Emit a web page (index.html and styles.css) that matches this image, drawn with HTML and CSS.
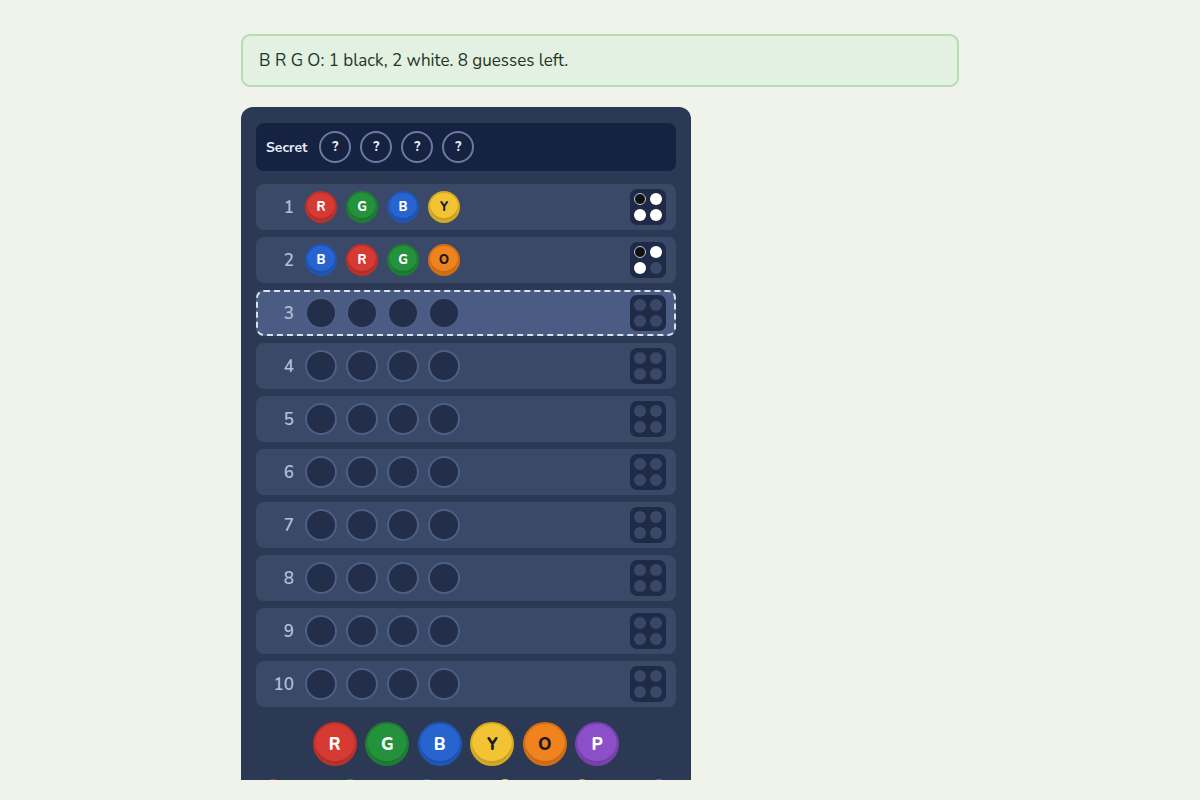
FILE: index.html
```html
<!DOCTYPE html>
<html lang="en">

<head>
    <meta charset="UTF-8">
    <meta name="viewport" content="width=device-width, initial-scale=1.0">
    <title>Mastermind</title>
    <link rel="stylesheet" href="styles.css">
</head>

<body>

    <div class="container">
        <!-- Mensagem de status -->
        <div class="status">B R G O: 1 black, 2 white. 8 guesses left.</div>

        <div class="board">
            <div class="secret">
                <span class="secret-label">Secret</span>
                <span class="hidden-peg">?</span>
                <span class="hidden-peg">?</span>
                <span class="hidden-peg">?</span>
                <span class="hidden-peg">?</span>
            </div>

            <div class="rows">
                <div class="row">
                    <span class="num">1</span>
                    <span class="peg red">R</span>
                    <span class="peg green">G</span>
                    <span class="peg blue">B</span>
                    <span class="peg yellow">Y</span>
                    <div class="feedback">
                        <span class="key black"></span><span class="key white"></span>
                        <span class="key white"></span><span class="key white"></span>
                    </div>
                </div>
                <div class="row">
                    <span class="num">2</span>
                    <span class="peg blue">B</span>
                    <span class="peg red">R</span>
                    <span class="peg green">G</span>
                    <span class="peg orange">O</span>
                    <div class="feedback">
                        <span class="key black"></span><span class="key white"></span>
                        <span class="key white"></span><span class="key"></span>
                    </div>
                </div>
                <div class="row active">
                    <span class="num">3</span>
                    <span class="peg empty"></span><span class="peg empty"></span>
                    <span class="peg empty"></span><span class="peg empty"></span>
                    <div class="feedback">
                        <span class="key"></span><span class="key"></span>
                        <span class="key"></span><span class="key"></span>
                    </div>
                </div>
                <div class="row">
                    <span class="num">4</span>
                    <span class="peg empty"></span><span class="peg empty"></span>
                    <span class="peg empty"></span><span class="peg empty"></span>
                    <div class="feedback">
                        <span class="key"></span><span class="key"></span>
                        <span class="key"></span><span class="key"></span>
                    </div>
                </div>
                <div class="row">
                    <span class="num">5</span>
                    <span class="peg empty"></span><span class="peg empty"></span>
                    <span class="peg empty"></span><span class="peg empty"></span>
                    <div class="feedback">
                        <span class="key"></span><span class="key"></span>
                        <span class="key"></span><span class="key"></span>
                    </div>
                </div>
                <div class="row">
                    <span class="num">6</span>
                    <span class="peg empty"></span><span class="peg empty"></span>
                    <span class="peg empty"></span><span class="peg empty"></span>
                    <div class="feedback">
                        <span class="key"></span><span class="key"></span>
                        <span class="key"></span><span class="key"></span>
                    </div>
                </div>
                <div class="row">
                    <span class="num">7</span>
                    <span class="peg empty"></span><span class="peg empty"></span>
                    <span class="peg empty"></span><span class="peg empty"></span>
                    <div class="feedback">
                        <span class="key"></span><span class="key"></span>
                        <span class="key"></span><span class="key"></span>
                    </div>
                </div>
                <div class="row">
                    <span class="num">8</span>
                    <span class="peg empty"></span><span class="peg empty"></span>
                    <span class="peg empty"></span><span class="peg empty"></span>
                    <div class="feedback">
                        <span class="key"></span><span class="key"></span>
                        <span class="key"></span><span class="key"></span>
                    </div>
                </div>
                <div class="row">
                    <span class="num">9</span>
                    <span class="peg empty"></span><span class="peg empty"></span>
                    <span class="peg empty"></span><span class="peg empty"></span>
                    <div class="feedback">
                        <span class="key"></span><span class="key"></span>
                        <span class="key"></span><span class="key"></span>
                    </div>
                </div>
                <div class="row">
                    <span class="num">10</span>
                    <span class="peg empty"></span><span class="peg empty"></span>
                    <span class="peg empty"></span><span class="peg empty"></span>
                    <div class="feedback">
                        <span class="key"></span><span class="key"></span>
                        <span class="key"></span><span class="key"></span>
                    </div>
                </div>
            </div>

            <!-- Paleta de cores -->
            <div class="palette">
                <button class="peg big red">R</button>
                <button class="peg big green">G</button>
                <button class="peg big blue">B</button>
                <button class="peg big yellow">Y</button>
                <button class="peg big orange">O</button>
                <button class="peg big purple">P</button>
            </div>

            <div class="legend">
                <span class="dot red"></span>
                <span class="dot green"></span>
                <span class="dot blue"></span>
                <span class="dot yellow"></span>
                <span class="dot orange"></span>
                <span class="dot purple"></span>
            </div>
        </div>
    </div>

</body>

</html>
```

FILE: styles.css
```css
/* Estilos gerais */
body {
    font-family: 'Nunito', 'Lato', 'Open Sans', sans-serif;
    background-color: #f0f3ea;
    margin: 0;
    padding: 34px 0 0;
    overflow: hidden;
}

.container {
    width: 718px;
    margin: 0 auto;
}

/* Mensagem */
.status {
    background-color: #e2f1e1;
    border: 2px solid #b6dcb3;
    border-radius: 9px;
    height: 49px;
    padding: 0 16px;
    display: flex;
    align-items: center;
    font-size: 17px;
    color: #263326;
}

/* Tabuleiro */
.board {
    width: 450px;
    height: 673px;
    margin-top: 20px;
    padding: 16px 15px 0;
    box-sizing: border-box;
    background-color: #2c3954;
    border-radius: 12px 12px 0 0;
    overflow: hidden;
}

.secret {
    height: 48px;
    background-color: #162241;
    border-radius: 8px;
    display: flex;
    align-items: center;
    gap: 9px;
    padding: 0 10px;
}

.secret-label {
    color: #e6ebf5;
    font-weight: 700;
    font-size: 14px;
    margin-right: 3px;
}

.hidden-peg {
    width: 28px;
    height: 28px;
    border: 2px solid #6c7b9c;
    border-radius: 50%;
    display: flex;
    align-items: center;
    justify-content: center;
    color: #e6ebf5;
    font-weight: 800;
    font-size: 13px;
}

.rows {
    margin-top: 13px;
    display: flex;
    flex-direction: column;
    gap: 7px;
}

.row {
    height: 46px;
    box-sizing: border-box;
    background-color: #3b4969;
    border-radius: 8px;
    display: flex;
    align-items: center;
    gap: 9px;
    padding: 0 10px;
}

.row.active {
    background-color: #4a5c83;
    border: 2px dashed #d9e1f0;
    padding: 0 8px;
}

.num {
    width: 28px;
    margin-right: 2px;
    text-align: right;
    color: #b4bfd8;
    font-size: 17px;
    font-weight: 600;
}

/* Pinos */
.peg {
    width: 32px;
    height: 32px;
    box-sizing: border-box;
    border-radius: 50%;
    display: flex;
    align-items: center;
    justify-content: center;
    font-family: inherit;
    font-weight: 800;
    font-size: 13px;
    color: #fff;
    box-shadow: inset 0 -3px 0 rgba(0, 0, 0, 0.18);
}

.peg.empty {
    background-color: #232f4a;
    border: 2px solid #4e5f85;
    box-shadow: none;
}

.red { background-color: #d63b33; border: 2px solid #bf2f29; }
.green { background-color: #24913c; border: 2px solid #1d7d32; }
.blue { background-color: #2764d0; border: 2px solid #1f55b6; }
.yellow { background-color: #f2c433; border: 2px solid #d9a91f; color: #1a1a1a; }
.orange { background-color: #f1831f; border: 2px solid #d46d14; color: #1a1a1a; }
.purple { background-color: #8b50c9; border: 2px solid #7640b0; }

/* Retorno */
.feedback {
    margin-left: auto;
    width: 36px;
    height: 36px;
    box-sizing: border-box;
    padding: 4px;
    background-color: #1f2b46;
    border-radius: 7px;
    display: grid;
    grid-template-columns: 12px 12px;
    gap: 4px;
}

.key {
    width: 12px;
    height: 12px;
    box-sizing: border-box;
    border-radius: 50%;
    background-color: #3a4867;
}

.key.white {
    background-color: #fff;
}

.key.black {
    background-color: #111;
    border: 1.5px solid #bcc5da;
}

/* Paleta */
.palette {
    margin-top: 15px;
    display: flex;
    justify-content: center;
    gap: 8.5px;
}

.peg.big {
    width: 44px;
    height: 44px;
    font-size: 17px;
    padding: 0;
    cursor: pointer;
}

.legend {
    margin-top: 13px;
    display: flex;
    justify-content: space-between;
    padding: 0 10px;
}

.dot {
    width: 14px;
    height: 14px;
    border-radius: 50%;
    border: none;
}
```
